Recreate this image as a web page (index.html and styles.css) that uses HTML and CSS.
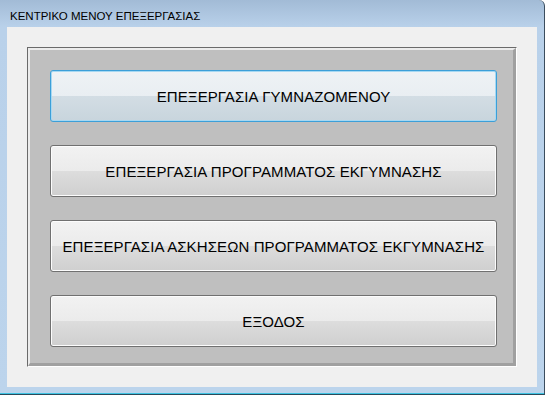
FILE: index.html
```html
<!DOCTYPE html>
<html>
<head>
<meta charset="utf-8">
<link rel="stylesheet" href="styles.css">
</head>
<body>
<div class="window">
  <div class="titlebar">ΚΕΝΤΡΙΚΟ ΜΕΝΟΥ ΕΠΕΞΕΡΓΑΣΙΑΣ</div>
  <div class="client">
    <div class="panel">
      <div class="panel-inner">
        <button class="btn btn-focus">ΕΠΕΞΕΡΓΑΣΙΑ ΓΥΜΝΑΖΟΜΕΝΟΥ</button>
        <button class="btn">ΕΠΕΞΕΡΓΑΣΙΑ ΠΡΟΓΡΑΜΜΑΤΟΣ ΕΚΓΥΜΝΑΣΗΣ</button>
        <button class="btn">ΕΠΕΞΕΡΓΑΣΙΑ ΑΣΚΗΣΕΩΝ ΠΡΟΓΡΑΜΜΑΤΟΣ ΕΚΓΥΜΝΑΣΗΣ</button>
        <button class="btn">ΕΞΟΔΟΣ</button>
      </div>
    </div>
  </div>
</div>
</body>
</html>
```

FILE: styles.css
```css
html, body {
  margin: 0;
  padding: 0;
  background: #ffffff;
}

.window {
  box-sizing: border-box;
  width: 545px;
  height: 395px;
  background: linear-gradient(to bottom, #a2bbd6 0px, #b9d1ea 27px, #bcd4ec 100%);
  border-right: 1px solid #3b4d5e;
  border-bottom: 1px solid #2a4a5a;
  border-top-right-radius: 6px;
  box-shadow: inset 0 -1px 0 #3ec3e2;
  display: flex;
  flex-direction: column;
  font-family: "Liberation Sans", Arial, sans-serif;
}

.titlebar {
  height: 27px;
  box-sizing: border-box;
  padding: 9px 0 0 10px;
  font-size: 11.5px;
  line-height: 14px;
  color: #000000;
}

.client {
  box-sizing: border-box;
  margin: 0 7px 0 7px;
  width: 530px;
  height: 360px;
  background: #f0f0f0;
  padding: 20px;
}

.panel {
  box-sizing: border-box;
  width: 490px;
  height: 320px;
  border: 1px solid;
  border-color: #6a6a6a #ffffff #ffffff #6a6a6a;
}

.panel-inner {
  box-sizing: border-box;
  height: 100%;
  background: #bfbfbf;
  border-style: solid;
  border-width: 2px 3px 3px 2px;
  border-color: #ececec #a0a0a0 #a0a0a0 #ececec;
  padding: 20px 16px 16px 20px;
  display: flex;
  flex-direction: column;
  gap: 23px;
}

.btn {
  box-sizing: border-box;
  width: 447px;
  height: 52px;
  flex: none;
  margin: 0;
  padding: 0;
  border: 1px solid #707070;
  border-radius: 3px;
  background: linear-gradient(to bottom, #f2f2f2 0%, #ebebeb 50%, #dddddd 50%, #cfcfcf 100%);
  box-shadow: inset 0 0 0 1px #fcfcfc;
  font-family: "Liberation Sans", Arial, sans-serif;
  font-size: 15px;
  letter-spacing: 0.1px;
  color: #000000;
  text-align: center;
  white-space: nowrap;
}

.btn-focus {
  border-color: #3c9fd8;
  background: linear-gradient(to bottom, #eef2f5 0%, #e9eef2 50%, #d3dde4 50%, #c8d5dd 100%);
  box-shadow: inset 0 0 0 1px #a6d8f2;
}
```
